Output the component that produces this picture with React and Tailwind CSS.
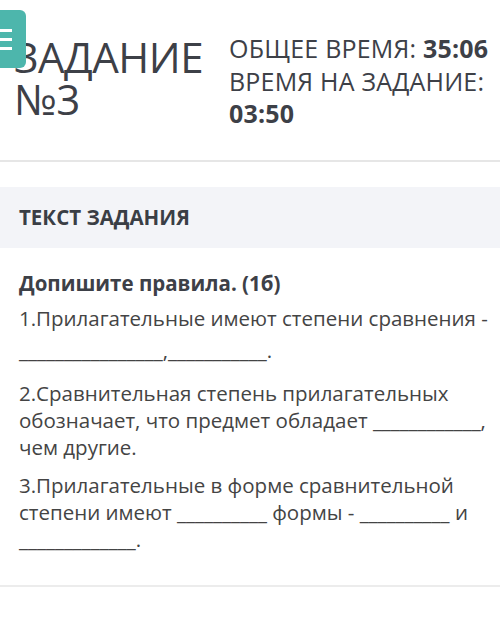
import React from 'react';

function MenuButton() {
    return (
        <div className="absolute left-0 top-[10px] w-[26px] h-[58px] bg-[#4db6ac] rounded-r-[6px] flex flex-col justify-center gap-[6px]">
            <span className="block w-[12px] h-[3px] bg-white"></span>
            <span className="block w-[12px] h-[3px] bg-white"></span>
            <span className="block w-[12px] h-[3px] bg-white"></span>
        </div>
    );
}

export default function App() {
    return (
        <div className="relative w-[500px] h-[623px] bg-white overflow-hidden text-[#444] font-['Open_Sans',sans-serif]">

            {/* Header */}
            <div className="h-[160px] flex items-start pt-[32px]">
                <h1 className="w-[229px] pl-[14px] mt-[4px] text-[42px] leading-[42px] tracking-[-0.5px] font-normal text-[#3d4047] whitespace-nowrap">
                    ЗАДАНИЕ
                    <br />
                    №3
                </h1>
                <div className="text-[25px] leading-[32.5px] tracking-[0.2px] text-[#3d4047] whitespace-nowrap">
                    <div>ОБЩЕЕ ВРЕМЯ: <span className="font-bold">35:06</span></div>
                    <div>ВРЕМЯ НА ЗАДАНИЕ:</div>
                    <div className="font-bold">03:50</div>
                </div>
            </div>

            <MenuButton />

            <div className="h-[2px] bg-[#e6e6e6]"></div>

            {/* Task title */}
            <div className="mt-[25px] h-[61px] bg-[#f3f4f8] px-[19px] flex items-center">
                <span className="text-[20.5px] font-bold text-[#3a3e45]">ТЕКСТ ЗАДАНИЯ</span>
            </div>

            {/* Task body */}
            <div className="px-[19px] pt-[22px] pb-[32px] text-[20.5px] leading-[27px] whitespace-nowrap">
                <p className="font-bold text-[#3d4047] mb-[5px]">Допишите правила. (1б)</p>
                <p className="mb-[14px] leading-[32px]">
                    1.Прилагательные имеют степени сравнения -<br />
                    ________________,___________.
                </p>
                <p className="mb-[11px]">
                    2.Сравнительная степень прилагательных<br />
                    обозначает, что предмет обладает ____________,<br />
                    чем другие.
                </p>
                <p>
                    3.Прилагательные в форме сравнительной<br />
                    степени имеют __________ формы - __________ и<br />
                    _____________.
                </p>
            </div>

            <div className="h-[2px] bg-[#ececec]"></div>
        </div>
    );
}
